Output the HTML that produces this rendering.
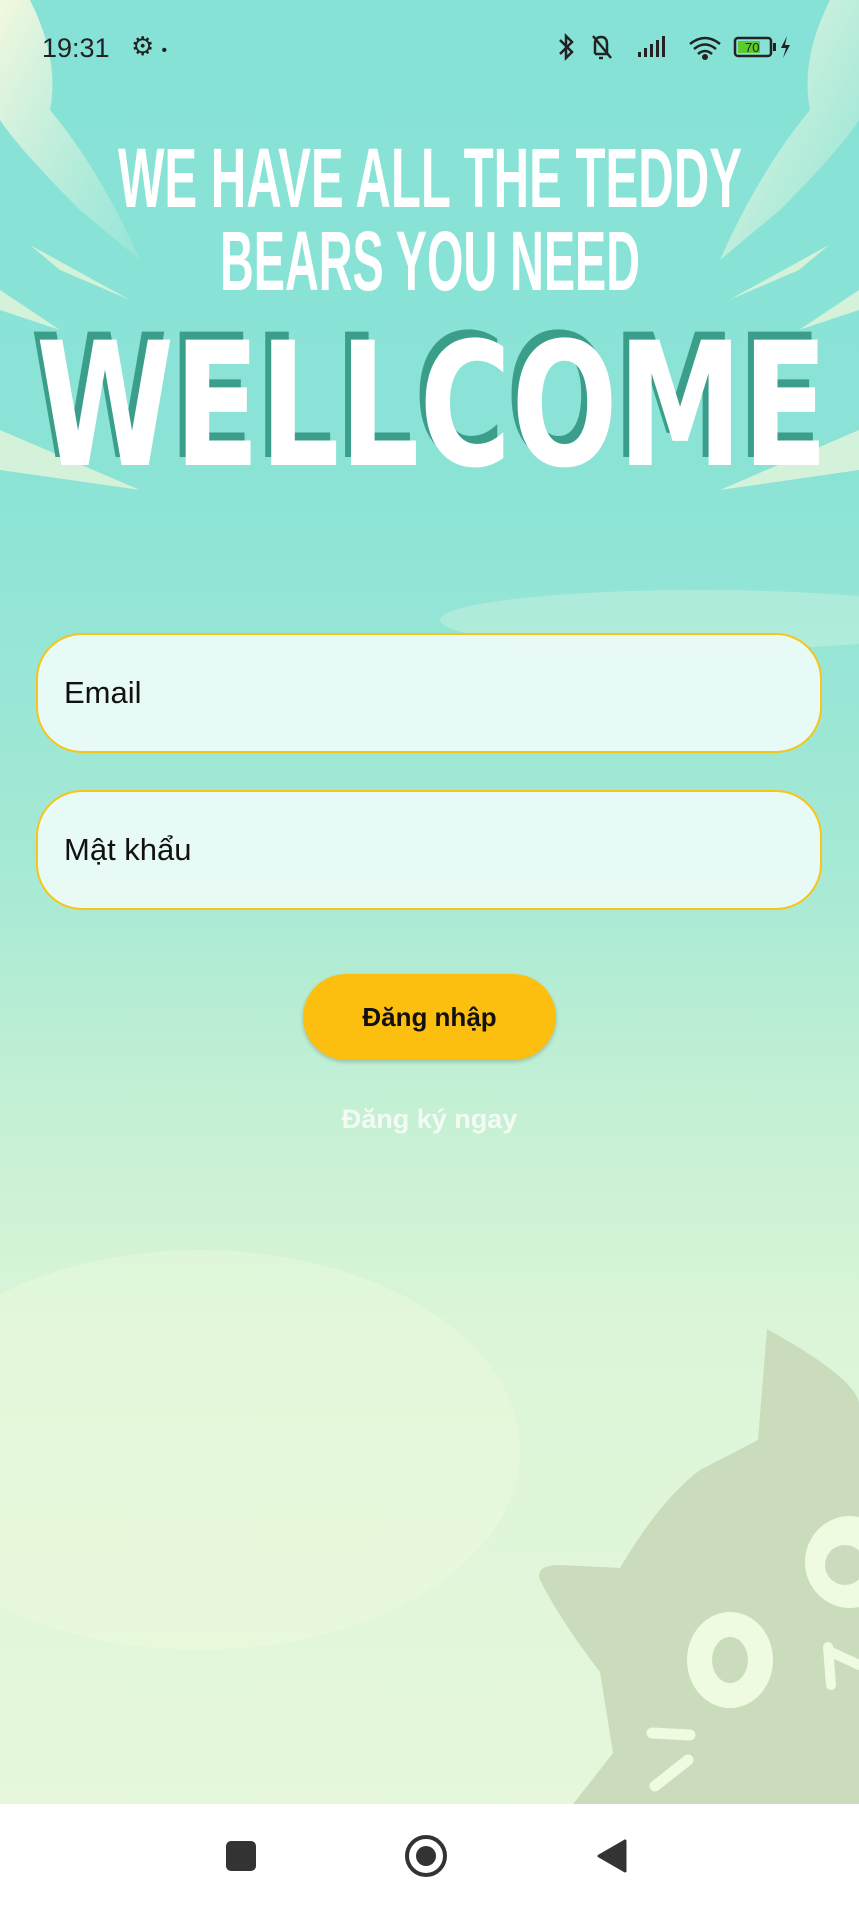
<!DOCTYPE html>
<html><head><meta charset="utf-8"><style>
*{margin:0;padding:0;box-sizing:border-box}
body{width:859px;height:1908px;overflow:hidden;position:relative;font-family:"Liberation Sans",sans-serif;
background:linear-gradient(180deg,#86e2d6 0%,#8be3d6 25%,#a5e9d5 45%,#c4f0d4 58%,#dcf5d8 70%,#e8f8dc 100%)}
.abs{position:absolute}
.field{left:36px;width:786px;height:120px;border:2px solid #f5c518;border-radius:46px;background:rgba(240,252,248,0.9);font-size:31px;color:#111;padding-left:26px;line-height:116px}
</style></head><body>
<svg class="abs" style="left:0;top:0" width="859" height="1908">
<defs><linearGradient id="c" x1="0" y1="0" x2="1" y2="1"><stop offset="0" stop-color="#fffbe0"/><stop offset="1" stop-color="#d8f3e0" stop-opacity="0.2"/></linearGradient></defs>
<path d="M0 0 L30 0 Q60 60 50 110 Q100 170 140 260 L80 210 Q20 150 0 120Z" fill="url(#c)" opacity="0.9"/>
<path d="M859 0 L830 0 Q800 60 810 110 Q760 170 720 260 L780 210 Q840 150 859 120Z" fill="url(#c)" opacity="0.9"/>
<path d="M30 245 L130 300 L60 270Z M0 290 L60 330 L0 310Z M0 430 L140 490 L0 470Z" fill="#f4f8dc" opacity="0.7"/>
<path d="M829 245 L729 300 L799 270Z M859 290 L799 330 L859 310Z M859 430 L720 490 L859 470Z" fill="#f4f8dc" opacity="0.7"/>
<ellipse cx="200" cy="1450" rx="320" ry="200" fill="#f4fbe0" opacity="0.35"/>
<ellipse cx="700" cy="620" rx="260" ry="30" fill="#d8f5e0" opacity="0.4"/>
<g font-family="'Liberation Sans Narrow','Liberation Sans',sans-serif" font-weight="bold" fill="#fff">
<text x="118" y="207" font-size="84" textLength="624" lengthAdjust="spacingAndGlyphs">WE HAVE ALL THE TEDDY</text>
<text x="220" y="290" font-size="84" textLength="420" lengthAdjust="spacingAndGlyphs">BEARS YOU NEED</text>
</g>
<g font-family="'DejaVu Sans','Liberation Sans',sans-serif" font-weight="900" font-size="172">
<text x="30" y="457" fill="#3a9e8a" textLength="792" lengthAdjust="spacingAndGlyphs">WELLCOME</text>
<text x="36" y="465" fill="#fff" textLength="792" lengthAdjust="spacingAndGlyphs">WELLCOME</text>
</g>
<path d="M767 1329 Q859 1380 859 1405 L859 1804 L573 1804 Q600 1770 613 1753 L600 1672 Q560 1620 540 1580 Q535 1565 560 1565 L620 1568 Q660 1500 700 1470 L758 1440 Z" fill="#cbdcbc"/>
<ellipse cx="730" cy="1660" rx="43" ry="48" fill="#eefbe0"/>
<ellipse cx="730" cy="1660" rx="18" ry="23" fill="#cbdcbc"/>
<ellipse cx="850" cy="1562" rx="45" ry="46" fill="#eefbe0"/>
<ellipse cx="845" cy="1565" rx="20" ry="20" fill="#cbdcbc"/>
<path d="M828 1647 L831 1685 M831 1652 L859 1665" stroke="#eefbe0" stroke-width="10" stroke-linecap="round"/>
<path d="M652 1733 L690 1735 M655 1786 L688 1760" stroke="#eefbe0" stroke-width="11" stroke-linecap="round"/>
</svg>
<div class="abs" style="left:42px;top:33px;font-size:27px;color:#222">19:31</div>
<div class="abs" style="left:131px;top:31px;font-size:26px;color:#222">⚙ <span style="font-size:16px">•</span></div>
<svg class="abs" style="left:555px;top:32px" width="260" height="32">
<g fill="none" stroke="#222" stroke-width="2.5"><path d="M5 8 L17 20 L11 26 L11 4 L17 10 L5 22"/><path d="M40 22 L40 12 Q40 5 46 5 Q52 5 52 12 L52 22 L40 22 M38 4 L56 26 M44 26 L48 26"/>
<path d="M135 12 Q150 0 165 12 M139 17 Q150 8 161 17 M143 22 Q150 16 157 22"/><rect x="180" y="6" width="36" height="18" rx="3"/></g>
<g fill="#222"><rect x="83" y="20" width="3" height="5"/><rect x="89" y="16" width="3" height="9"/><rect x="95" y="12" width="3" height="13"/><rect x="101" y="8" width="3" height="17"/><rect x="107" y="4" width="3" height="21"/><circle cx="150" cy="25" r="3"/><rect x="218" y="11" width="3" height="8"/><path d="M232 4 L226 16 L231 16 L228 26 L235 13 L230 13Z"/></g>
<rect x="183" y="9" width="22" height="12" fill="#5ccb2e"/><text x="190" y="20" font-size="13" fill="#222" font-family="Liberation Sans">70</text>
</svg>
<div class="abs field" style="top:633px">Email</div>
<div class="abs field" style="top:790px">Mật khẩu</div>
<div class="abs" style="left:303px;top:974px;width:253px;height:86px;border-radius:43px;background:#fdbf0f;box-shadow:0 2px 4px rgba(0,0,0,0.2);text-align:center;line-height:86px;font-size:26px;font-weight:bold;color:#111">Đăng nhập</div>
<div class="abs" style="left:0;width:859px;top:1104px;text-align:center;font-size:27px;font-weight:bold;color:#f4fbf4">Đăng ký ngay</div>
<div class="abs" style="left:0;top:1804px;width:859px;height:104px;background:#fff"></div>
<div class="abs" style="left:226px;top:1841px;width:30px;height:30px;background:#333;border-radius:5px"></div>
<div class="abs" style="left:405px;top:1835px;width:42px;height:42px;border:4px solid #333;border-radius:50%"></div>
<div class="abs" style="left:416px;top:1846px;width:20px;height:20px;background:#333;border-radius:50%"></div>
<svg class="abs" style="left:596px;top:1839px" width="32" height="34"><path d="M29 2 L29 32 L3 17Z" fill="#333" stroke="#333" stroke-width="3" stroke-linejoin="round"/></svg>
</body></html>
